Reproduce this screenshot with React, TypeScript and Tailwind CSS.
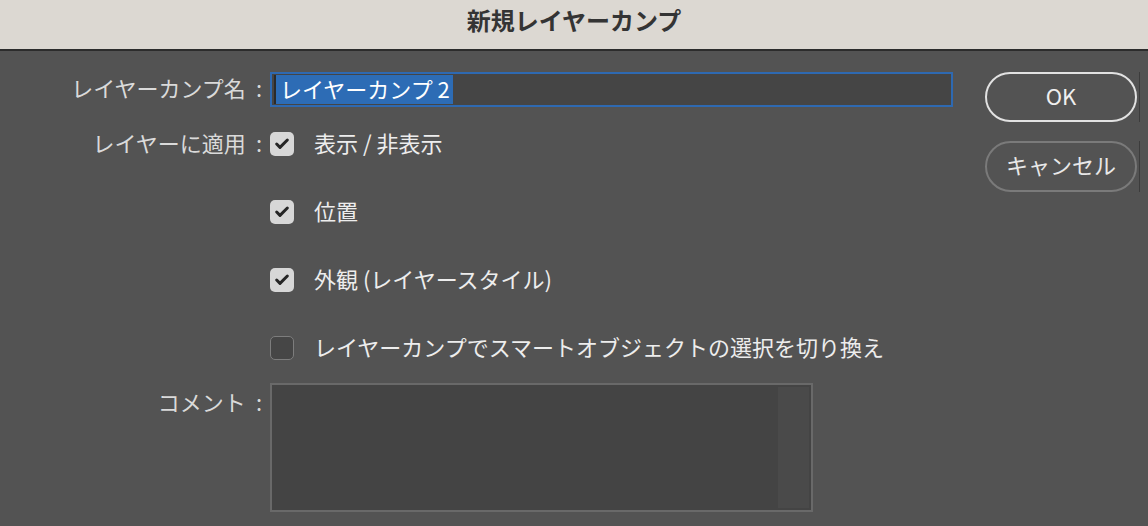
import { Check } from "lucide-react";

const font = { fontFamily: '"Noto Sans CJK JP", "Noto Sans", sans-serif' };

function Box({ checked }: { checked: boolean }) {
    if (!checked) {
        return <span className="w-6 h-6 rounded-[5px] bg-[#464646] border-[1.5px] border-[#7d7d7d] shrink-0" />;
    }
    return (
        <span className="w-6 h-6 rounded-[5px] bg-[#d7d7d7] flex items-center justify-center shrink-0">
            <Check size={16} strokeWidth={4.5} className="text-[#262626]" />
        </span>
    );
}

function Label({ text }: { text?: string }) {
    return (
        <div className="w-[262px] mb-[5px] text-right text-[#dadada] whitespace-nowrap">
            {text && (
                <>
                    {text}
                    <span className="ml-[10px]">:</span>
                </>
            )}
        </div>
    );
}

function Row({ label, children, className }: { label?: string; children: React.ReactNode; className: string }) {
    return (
        <div className={`flex items-center ${className}`}>
            <Label text={label} />
            <div className="ml-2 flex items-center">{children}</div>
        </div>
    );
}

export default function App() {
    const options = [
        { text: "表示 / 非表示", checked: true },
        { text: "位置", checked: true },
        { text: "外観 (レイヤースタイル)", checked: true },
        { text: "レイヤーカンプでスマートオブジェクトの選択を切り換え", checked: false },
    ];

    return (
        <div style={font} className="w-[1148px] h-[526px] bg-[#535353] overflow-hidden text-[22px] leading-[30px]">
            {/* Title bar */}
            <div className="h-[51px] bg-[#dcd8d2] border-b-2 border-[#2c2c2c] flex items-center justify-center">
                <h1 className="text-[24px] font-bold text-[#343434] mb-[9px]">新規レイヤーカンプ</h1>
            </div>

            <div className="flex">
                <div className="flex flex-col">
                    <Row label="レイヤーカンプ名" className="mt-[21px] h-[35px]">
                        <div className="w-[683px] h-[35px] border-2 border-[#2e69b1] bg-[#454545] flex items-center pl-[2px]">
                            <span className="w-[2px] h-[29px] bg-[#2a2a2a]" />
                            <span className="bg-[#2d6cb5] text-white h-[29px] pl-1 pr-[3px] flex items-center pb-[3px]">
                                レイヤーカンプ 2
                            </span>
                        </div>
                    </Row>

                    {options.map((o, i) => (
                        <Row
                            key={o.text}
                            label={i === 0 ? "レイヤーに適用" : undefined}
                            className={i === 0 ? "mt-[25px] h-6" : "mt-[44px] h-6"}
                        >
                            <Box checked={o.checked} />
                            <span className="ml-5 mb-[5px] text-[#ededed] whitespace-nowrap">{o.text}</span>
                        </Row>
                    ))}

                    <div className="flex items-start mt-[23px]">
                        <div className="w-[262px] text-right text-[#dadada] mt-[3px] whitespace-nowrap">
                            コメント<span className="ml-[10px]">:</span>
                        </div>
                        <div className="ml-2 w-[543px] h-[129px] border-2 border-[#696969] bg-[#444444] flex justify-end p-[2px]">
                            <div className="w-[31px] h-full bg-[#4a4a4a]" />
                        </div>
                    </div>
                </div>

                {/* Buttons */}
                <div className="ml-8 mt-[21px] flex flex-col gap-[19px]">
                    <div className="flex items-stretch">
                        <button className="w-[152px] h-[50px] rounded-full border-2 border-[#e2e2e2] text-[#efefef] text-[22px] pb-[5px]">
                            OK
                        </button>
                        <span className="ml-[2px] w-px bg-[#3c3c3c]" />
                    </div>
                    <div className="flex items-stretch">
                        <button className="w-[152px] h-[51px] rounded-full border-2 border-[#7a7a7a] text-[#e8e8e8] text-[22px] pb-[5px]">
                            キャンセル
                        </button>
                        <span className="ml-[2px] w-px bg-[#3c3c3c]" />
                    </div>
                </div>
            </div>
        </div>
    );
}
